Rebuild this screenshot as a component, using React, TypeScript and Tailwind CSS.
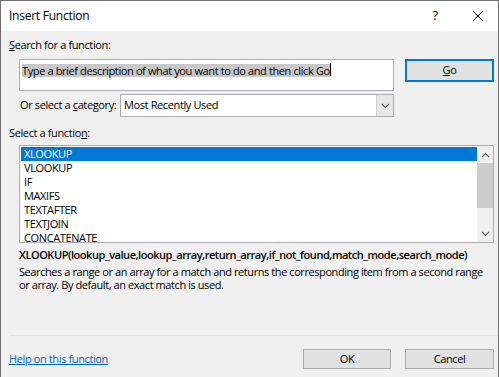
import React from "react";

const items = ["XLOOKUP", "VLOOKUP", "IF", "MAXIFS", "TEXTAFTER", "TEXTJOIN", "CONCATENATE"];

function Chevron({ up }: { up?: boolean }) {
  return (
    <svg width="9" height="6" viewBox="0 0 9 6" className="block">
      <path d={up ? "M1 5 L4.5 1.5 L8 5" : "M1 1 L4.5 4.5 L8 1"} fill="none" stroke="#606060" strokeWidth="1.2" />
    </svg>
  );
}

export default function App() {
  return (
    <div
      className="w-[499px] h-[377px] bg-[#f0f0f0] border-l border-t border-r border-[#707070] flex flex-col text-black text-[11px] tracking-[-0.38px] overflow-hidden"
      style={{ fontFamily: '"Open Sans", "Noto Sans", sans-serif' }}
    >
      {/* title bar */}
      <div className="h-[30px] bg-white flex items-center pl-[8px] shrink-0">
        <span className="text-[12px] tracking-[-0.25px]">Insert Function</span>
        <div className="ml-auto w-[46px] flex justify-center text-[13px]">?</div>
        <div className="w-[40px] shrink-0 flex justify-center">
          <svg width="12" height="12" viewBox="0 0 12 12" className="shrink-0">
            <path d="M1 1 L11 11 M11 1 L1 11" stroke="#000" strokeWidth="1" />
          </svg>
        </div>
      </div>

      <div className="flex flex-col pl-[8px] pr-[4px]">
        <div className="mt-[7px] h-[14px] leading-[14px] whitespace-nowrap">
          <span className="underline">S</span>earch for a function:
        </div>

        <div className="mt-[7px] flex items-start">
          <div className="ml-[10px] w-[375px] h-[32px] bg-white border border-[#abadb3] pl-[2px] pt-[3px] whitespace-nowrap overflow-hidden">
            <span className="bg-[#c8c8c8] leading-[13px] inline-block">
              Type a brief description of what you want to do and then click Go
            </span>
            <span className="inline-block w-[1px] h-[13px] bg-black align-top"></span>
          </div>
          <div className="ml-[11px] w-[89px] h-[23px] bg-[#e1e1e1] border-2 border-[#0078d7] flex items-center justify-center">
            <span><span className="underline">G</span>o</span>
          </div>
        </div>

        <div className="mt-[3px] h-[23px] flex items-center">
          <div className="ml-[11px] w-[100px] whitespace-nowrap">
            Or select a <span className="underline">c</span>ategory:
          </div>
          <div className="w-[274px] h-[23px] bg-white border border-[#abadb3] flex items-center">
            <span className="pl-[3px] flex-1 whitespace-nowrap">Most Recently Used</span>
            <div className="w-[17px] h-[21px] bg-[#e6e6e6] border-l border-[#cfcfcf] flex items-center justify-center">
              <Chevron />
            </div>
          </div>
        </div>

        <div className="mt-[9px] h-[14px] leading-[14px] whitespace-nowrap">
          Select a functio<span className="underline">n</span>:
        </div>

        <div className="mt-[5px] ml-[10px] w-[475px] h-[98px] bg-white border border-[#abadb3] flex">
          <div className="flex-1 pt-[1px] pl-[1px]">
            {items.map((it, i) => (
              <div
                key={it}
                className={
                  "h-[14px] leading-[14px] pl-[3px] " +
                  (i === 0 ? "bg-[#0078d7] text-white" : "")
                }
              >
                {it}
              </div>
            ))}
          </div>
          <div className="w-[16px] bg-[#f0f0f0] flex flex-col">
            <div className="h-[17px] flex items-center justify-center">
              <Chevron up />
            </div>
            <div className="h-[45px] bg-[#cdcdcd]"></div>
            <div className="flex-1"></div>
            <div className="h-[17px] flex items-center justify-center">
              <Chevron />
            </div>
          </div>
        </div>

        <div className="mt-[5px] ml-[10px] h-[14px] leading-[14px] font-semibold tracking-[-0.45px] whitespace-nowrap">
          XLOOKUP(lookup_value,lookup_array,return_array,if_not_found,match_mode,search_mode)
        </div>
        <div className="mt-[3px] ml-[10px] leading-[13px] w-[466px] tracking-[-0.42px]">
          Searches a range or an array for a match and returns the corresponding item from a second range or array. By default, an exact match is used.
        </div>
      </div>

      <div className="mt-[44px] ml-[8px] h-[1px] bg-[#dfdfdf] shrink-0"></div>

      <div className="mt-[13px] h-[20px] flex items-center pl-[8px] pr-[4px]">
        <span className="text-[#0066cc] underline whitespace-nowrap">Help on this function</span>
        <div className="ml-auto w-[88px] h-[20px] bg-[#e1e1e1] border border-[#adadad] flex items-center justify-center">
          OK
        </div>
        <div className="ml-[14px] w-[89px] h-[20px] bg-[#e1e1e1] border border-[#adadad] flex items-center justify-center">
          Cancel
        </div>
      </div>
    </div>
  );
}
